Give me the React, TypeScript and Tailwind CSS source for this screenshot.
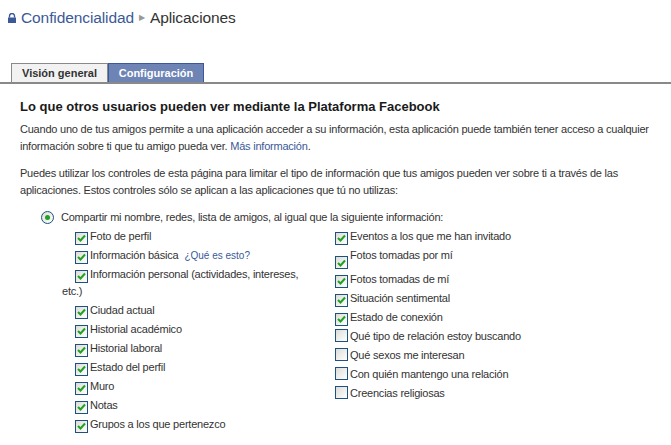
import React from "react";

const left = [
  "Foto de perfil",
  "Información básica",
  "Información personal (actividades, intereses, etc.)",
  "Ciudad actual",
  "Historial académico",
  "Historial laboral",
  "Estado del perfil",
  "Muro",
  "Notas",
  "Grupos a los que pertenezco",
];

const right: [string, boolean][] = [
  ["Eventos a los que me han invitado", true],
  ["Fotos tomadas por mí", true],
  ["Fotos tomadas de mí", true],
  ["Situación sentimental", true],
  ["Estado de conexión", true],
  ["Qué tipo de relación estoy buscando", false],
  ["Qué sexos me interesan", false],
  ["Con quién mantengo una relación", false],
  ["Creencias religiosas", false],
];

function Box({ on }: { on: boolean }) {
  return (
    <span className="inline-flex h-[13px] w-[13px] shrink-0 items-center justify-center border border-[#1c5180] bg-gradient-to-br from-[#dcdcd7] to-white align-[-2px]">
      {on && (
        <svg width="9" height="8" viewBox="0 0 9 8">
          <path d="M1 4 L3.5 6.5 L8 1.5" stroke="#21a121" strokeWidth="2" fill="none" />
        </svg>
      )}
    </span>
  );
}

export default function App() {
  return (
    <div className="min-h-screen w-full bg-white text-[11px] tracking-[-0.22px] text-[#333] font-['Liberation_Sans',Arial,sans-serif]">
      {/* breadcrumb */}
      <div className="flex items-center gap-[5px] pl-[8px] pt-[7px] text-[15.5px] leading-[22px] tracking-[-0.1px]">
        <svg width="8" height="10" viewBox="0 0 8 10">
          <path d="M1.5 4.5 V3 a2.5 2.5 0 0 1 5 0 V4.5" stroke="#3b5998" strokeWidth="1.4" fill="none" />
          <rect x="0" y="4.5" width="8" height="5.5" fill="#3b5998" />
        </svg>
        <span className="text-[#3b5998]">Confidencialidad</span>
        <span className="text-[8px] text-[#999]">▶</span>
        <span className="text-[#333]">Aplicaciones</span>
      </div>

      {/* tabs */}
      <div className="mt-[34px] flex border-b-2 border-[#898989] pl-[11px] tracking-normal">
        <div className="flex h-[19px] w-[97px] items-center justify-center border border-b-0 border-[#898989] bg-[#f2f2f2] font-bold text-[#333]">
          Visión general
        </div>
        <div className="flex h-[19px] w-[96px] items-center justify-center border border-b-0 border-[#3b5998] bg-[#6d84b4] font-bold text-white">
          Configuración
        </div>
      </div>

      <div className="pl-[20px] pr-[8px] pt-[14px]">
        <h2 className="text-[13px] font-bold leading-[18px] tracking-normal text-[#1a1a1a]">
          Lo que otros usuarios pueden ver mediante la Plataforma Facebook
        </h2>
        <p className="mt-[5px] leading-[17px]">
          Cuando uno de tus amigos permite a una aplicación acceder a su información, esta aplicación puede también tener acceso a cualquier
          información sobre ti que tu amigo pueda ver. <a className="text-[#3b5998]">Más información</a>.
        </p>
        <p className="mt-[10px] pr-[12px] leading-[17px]">
          Puedes utilizar los controles de esta página para limitar el tipo de información que tus amigos pueden ver sobre ti a través de las
          aplicaciones. Estos controles sólo se aplican a las aplicaciones que tú no utilizas:
        </p>

        <div className="mt-[10px] flex items-center gap-[7px] pl-[21px] leading-[17px]">
          <span className="flex h-[13px] w-[13px] items-center justify-center rounded-full border border-[#1c5180] bg-gradient-to-br from-[#dcdcd7] to-white">
            <span className="h-[5px] w-[5px] rounded-full bg-[#21a121]" />
          </span>
          <span>Compartir mi nombre, redes, lista de amigos, al igual que la siguiente información:</span>
        </div>

        <div className="mt-[2px] grid grid-cols-[260px_260px] pl-[42px]">
          <div className="flex flex-col gap-[2px] pr-[8px]">
            {left.map((l, i) => (
              <div key={l} className="leading-[17px]">
                <span className="ml-[13px] mr-[2px]">
                  <Box on />
                </span>
                {l}
                {i === 1 && <span className="ml-[6px] text-[10px] tracking-normal text-[#3b5998]">¿Qué es esto?</span>}
              </div>
            ))}
          </div>
          <div className="flex flex-col gap-[2px]">
            {right.map(([l, on]) =>
              l === "Fotos tomadas por mí" ? (
                <div key={l} className="flex items-start leading-[17px]">
                  <span className="ml-[13px] mr-[2px] mt-[9px] flex">
                    <Box on={on} />
                  </span>
                  <span>{l}</span>
                </div>
              ) : (
                <div key={l} className="leading-[17px]">
                  <span className="ml-[13px] mr-[2px]">
                    <Box on={on} />
                  </span>
                  {l}
                </div>
              )
            )}
          </div>
        </div>
      </div>
    </div>
  );
}
